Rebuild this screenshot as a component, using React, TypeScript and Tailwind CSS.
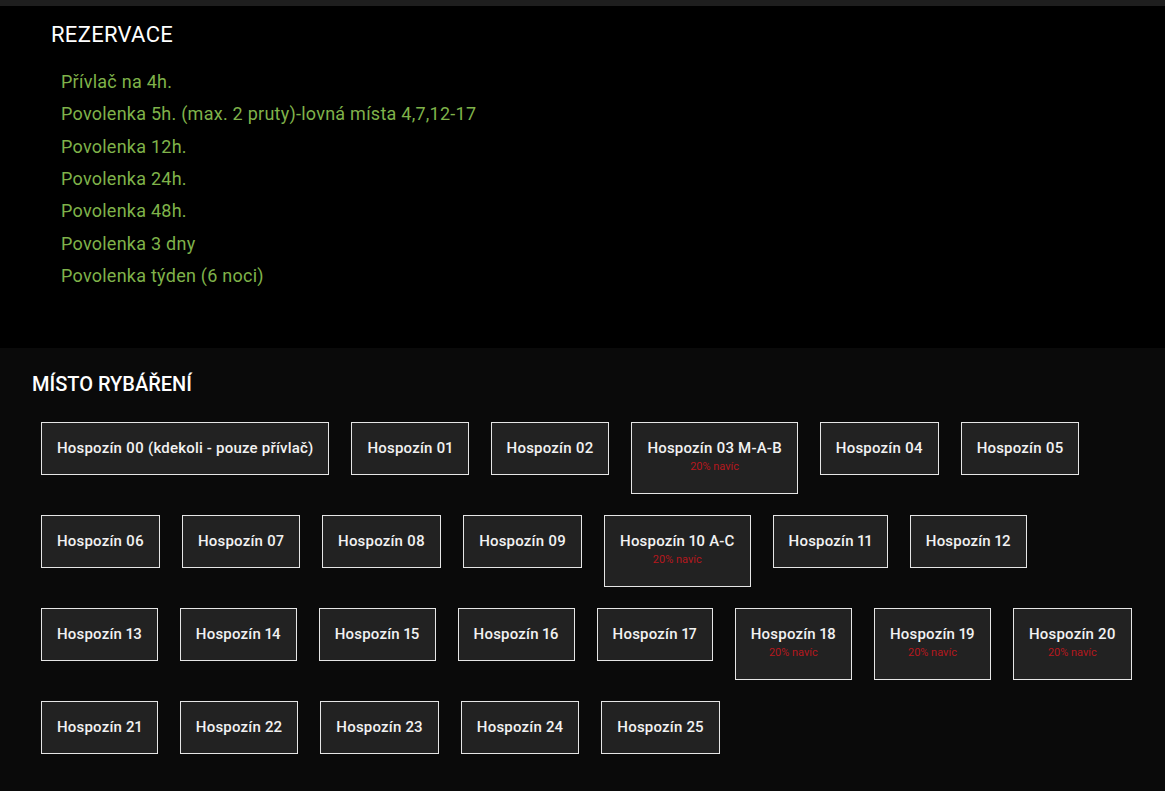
import React from "react";

const items = [
  "Přívlač na 4h.",
  "Povolenka 5h. (max. 2 pruty)-lovná místa 4,7,12-17",
  "Povolenka 12h.",
  "Povolenka 24h.",
  "Povolenka 48h.",
  "Povolenka 3 dny",
  "Povolenka týden (6 noci)",
];

const places: { name: string; extra?: boolean }[] = [
  { name: "Hospozín 00 (kdekoli - pouze přívlač)" },
  { name: "Hospozín 01" },
  { name: "Hospozín 02" },
  { name: "Hospozín 03 M-A-B", extra: true },
  { name: "Hospozín 04" },
  { name: "Hospozín 05" },
  { name: "Hospozín 06" },
  { name: "Hospozín 07" },
  { name: "Hospozín 08" },
  { name: "Hospozín 09" },
  { name: "Hospozín 10 A-C", extra: true },
  { name: "Hospozín 11" },
  { name: "Hospozín 12" },
  { name: "Hospozín 13" },
  { name: "Hospozín 14" },
  { name: "Hospozín 15" },
  { name: "Hospozín 16" },
  { name: "Hospozín 17" },
  { name: "Hospozín 18", extra: true },
  { name: "Hospozín 19", extra: true },
  { name: "Hospozín 20", extra: true },
  { name: "Hospozín 21" },
  { name: "Hospozín 22" },
  { name: "Hospozín 23" },
  { name: "Hospozín 24" },
  { name: "Hospozín 25" },
];

const rows = [
  places.slice(0, 6),
  places.slice(6, 13),
  places.slice(13, 21),
  places.slice(21, 26),
];

export default function App() {
  return (
    <div
      className="min-h-[791px] bg-[#0a0a0a] text-white"
      style={{ fontFamily: "Roboto, 'Noto Sans', sans-serif" }}
    >
      <div className="h-[6px] bg-[#1e1e1e]" />
      <section className="h-[342px] bg-black pl-[51px] pt-[15px]">
        <h2 className="text-[22px] leading-[28px] tracking-[0.3px] text-white">REZERVACE</h2>
        <ul className="mt-[17px] pl-[10px]">
          {items.map((t) => (
            <li key={t} className="text-[18px] leading-[32.33px] tracking-[0.25px] text-[#7fb24a]">
              {t}
            </li>
          ))}
        </ul>
      </section>
      <section className="pl-[32px] pt-[22px] pb-[30px]">
        <h2 className="text-[20px] leading-[28px] font-medium text-white">MÍSTO RYBÁŘENÍ</h2>
        <div className="mt-[24px] flex flex-col gap-[21px] pl-[9px]">
          {rows.map((row, i) => (
            <div key={i} className="flex items-start gap-[22px]">
              {row.map((p) => (
                <div
                  key={p.name}
                  className="flex flex-col items-center border border-[#e6e6e6] bg-[#222222] px-[15px] py-[17px]"
                >
                  <span className="text-[15px] leading-[17px] font-medium tracking-[0.2px] proportional-nums whitespace-nowrap text-[#f2f2f2]">
                    {p.name}
                  </span>
                  {p.extra && (
                    <span className="text-[11px] leading-[19px] text-[#b5181e]">20% navíc</span>
                  )}
                </div>
              ))}
            </div>
          ))}
        </div>
      </section>
    </div>
  );
}
